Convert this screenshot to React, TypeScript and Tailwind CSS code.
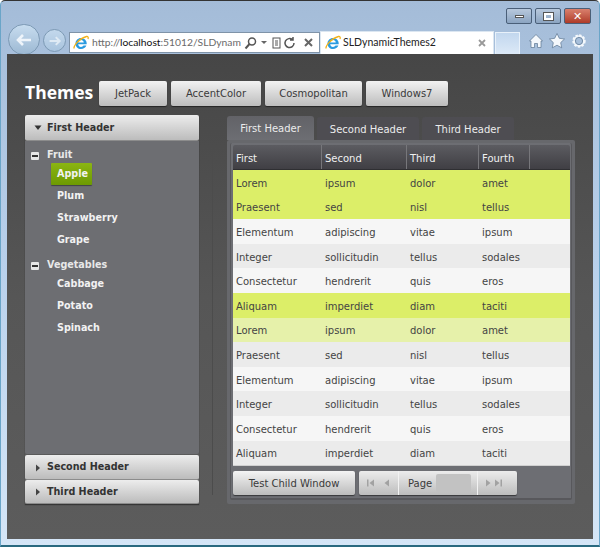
const font = { fontFamily: '"DejaVu Sans", Verdana, sans-serif' }
const chromeFont = { fontFamily: 'Lato, "Open Sans", sans-serif' }

const rows = [
  ['Lorem', 'ipsum', 'dolor', 'amet', 'bg-[#dcee68]'],
  ['Praesent', 'sed', 'nisl', 'tellus', 'bg-[#dcee68]'],
  ['Elementum', 'adipiscing', 'vitae', 'ipsum', 'bg-[#f6f6f6]'],
  ['Integer', 'sollicitudin', 'tellus', 'sodales', 'bg-[#ebebeb]'],
  ['Consectetur', 'hendrerit', 'quis', 'eros', 'bg-[#f6f6f6]'],
  ['Aliquam', 'imperdiet', 'diam', 'taciti', 'bg-[#dcee68]'],
  ['Lorem', 'ipsum', 'dolor', 'amet', 'bg-[#e6f1aa]'],
  ['Praesent', 'sed', 'nisl', 'tellus', 'bg-[#ebebeb]'],
  ['Elementum', 'adipiscing', 'vitae', 'ipsum', 'bg-[#f6f6f6]'],
  ['Integer', 'sollicitudin', 'tellus', 'sodales', 'bg-[#ebebeb]'],
  ['Consectetur', 'hendrerit', 'quis', 'eros', 'bg-[#f6f6f6]'],
  ['Aliquam', 'imperdiet', 'diam', 'taciti', 'bg-[#ebebeb]'],
]

const IeLogo = ({ size }: { size: number }) => (
  <svg width={size} height={size} viewBox="0 0 16 16" fill="none">
    <path d="M13.6 9.3H5.2c.1 1.6 1.3 2.6 2.8 2.6 1.1 0 2-.5 2.5-1.4h2.9c-.8 2.2-2.9 3.6-5.4 3.6C5 14.1 2.5 11.6 2.5 8.5S5 3 8 3c3.2 0 5.7 2.4 5.7 5.5 0 .3 0 .5-.1.8zM5.2 7.4h5.6C10.700 6 9.500 5 8 5 6.600 5 5.400 6 5.200 7.400z" fill="#2a9be0" />
    <path d="M1 13.500C.6 11 5.500 3.500 13.500 1.500c1.500-.3 2 .8 1.500 2.500" stroke="#f2b21a" strokeWidth="1.300" />
  </svg>
)

const WinButton = ({ w, tone, children }: { w: string; tone: string; children: React.ReactNode }) => (
  <div className={`${w} ${tone} h-[16px] rounded-[2px] border border-[#4a5f78] flex items-center justify-center`}>
    {children}
  </div>
)

const ThemeButton = ({ w, label }: { w: string; label: string }) => (
  <button className={`${w} h-[25px] rounded-[2px] bg-gradient-to-b from-[#f2f2f2] to-[#bdbdbd] text-[10px] text-[#3a3a3a] shadow-[0_1px_1px_rgba(0,0,0,0.5)]`}>
    {label}
  </button>
)

const Caret = ({ open }: { open?: boolean }) => (
  <svg width="8" height="8" viewBox="0 0 8 8">
    {open ? <path d="M0.500 1.500h7L4 6z" fill="#333" /> : <path d="M2 0.500v7L6 4z" fill="#444" />}
  </svg>
)

const AccHeader = ({ label, open, h }: { label: string; open?: boolean; h: string }) => (
  <div className={`${h} shrink-0 flex items-center pl-[9px] pt-[1px] gap-[5px] bg-gradient-to-b from-[#ededed] to-[#bcbcbc] border-b border-[#8c8c8c] rounded-[2px] text-[9.6px] font-bold text-[#333]`}>
    <Caret open={open} />
    <span>{label}</span>
  </div>
)

const Collapse = () => (
  <div className="w-[8px] h-[8px] bg-[#e6e6e6] flex items-center justify-center rounded-[1px]">
    <div className="w-[6px] h-[2px] bg-[#333]" />
  </div>
)

const TreeItem = ({ label, selected }: { label: string; selected?: boolean }) => (
  <div className="h-[22px] pl-[26px] flex items-center">
    <span className={`h-[22px] flex items-center px-[6px] text-[9.6px] font-bold text-[#f2f2f2] rounded-[1px] ${selected ? 'w-[41px] bg-gradient-to-b from-[#8bb512] to-[#6d9a02] shadow-[0_1px_1px_rgba(0,0,0,0.4)]' : ''}`}>
      {label}
    </span>
  </div>
)

const TreeGroup = ({ label, items }: { label: string; items: string[] }) => (
  <div>
    <div className="h-[15px] pl-[6px] flex items-center gap-[8px] text-[9.6px] font-bold text-[#e8e8e8]">
      <Collapse />
      <span>{label}</span>
    </div>
    {items.map((item) => (
      <TreeItem key={item} label={item} selected={item === 'Apple'} />
    ))}
  </div>
)

const Tab = ({ w, label, active }: { w: string; label: string; active?: boolean }) => (
  <div className={`${w} flex items-center justify-center rounded-t-[3px] text-[10px] text-[#ececec] ${active ? 'h-[24px] bg-gradient-to-b from-[#626267] to-[#6d6e73]' : 'h-[23px] pt-[1px] bg-[#4e4d52]'}`}>
    {label}
  </div>
)

const HeadCell = ({ w, label }: { w: string; label: string }) => (
  <div className={`${w} h-full flex items-center pl-[3px] pt-[2px] border-r border-[#77777b] text-[10px] text-[#f0f0f0]`}>{label}</div>
)

const PagerArrow = ({ d }: { d: string }) => (
  <svg className="shrink-0" width="9" height="8" viewBox="0 0 9 8">
    <path d={d} fill="#a2a2a2" />
  </svg>
)

export default function App() {
  return (
    <div style={font} className="w-[600px] h-[547px] overflow-hidden flex flex-col bg-gradient-to-b from-[#a4bcd8] via-[#b9d1ec] to-[#d5e6f7] border-t border-x border-[#6aa5c8] border-t-[#333] border-b-2 border-b-[#2a6a80] rounded-t-[5px]">
      <div className="h-[24px] shrink-0 pt-[7px] pr-[8px] flex justify-end gap-[3px]">
        <WinButton w="w-[26px]" tone="bg-gradient-to-b from-[#b8c9dd] to-[#8ba4c1]">
          <div className="w-[9px] h-[3px] bg-white border border-[#555]" />
        </WinButton>
        <WinButton w="w-[26px]" tone="bg-gradient-to-b from-[#b8c9dd] to-[#8ba4c1]">
          <div className="w-[9px] h-[7px] border-2 border-white outline outline-[#555]" />
        </WinButton>
        <WinButton w="w-[27px]" tone="bg-gradient-to-b from-[#d9806d] to-[#ae3a28]">
          <span className="text-[11px] leading-none font-bold text-white">✕</span>
        </WinButton>
      </div>
      <div className="h-[29px] shrink-0 flex items-end pl-[7px]">
        <div className="w-[32px] h-[31px] mb-[-1px] rounded-full bg-gradient-to-b from-[#c7dcef] to-[#9db9d3] border border-[#7d9ab5] flex items-center justify-center">
          <svg width="18" height="14" viewBox="0 0 18 14" fill="none">
            <path d="M16 7H3M8 2 3 7l5 5" stroke="#eef4fa" strokeWidth="2.600" />
          </svg>
        </div>
        <div className="ml-[3px] mb-[2px] w-[23px] h-[23px] rounded-full bg-gradient-to-b from-[#c3d8ec] to-[#a9c4de] border border-[#7d9ab5] flex items-center justify-center">
          <svg width="14" height="12" viewBox="0 0 18 14" fill="none">
            <path d="M2 7h13M10 2l5 5-5 5" stroke="#dfeaf4" strokeWidth="2.600" />
          </svg>
        </div>
        <div style={chromeFont} className="ml-[3px] w-[251px] h-[21px] mb-[1px] bg-white border border-[#7f93a8] flex items-center pl-[3px] text-[10.3px] text-[#6a6a6a]">
          <IeLogo size={16} />
          <span className="ml-[3px] w-[148px] whitespace-nowrap">
            http://<span className="text-[#111]">localhost</span>:51012/SLDynam
          </span>
          <svg className="ml-[4px]" width="54" height="14" viewBox="0 0 54 14" fill="none" stroke="#555" strokeWidth="1.500">
            <circle cx="8" cy="5.500" r="3.500" />
            <path d="M5.500 8 1.500 12.500" strokeWidth="2" />
            <path d="M17 5h6l-3 3z" fill="#666" stroke="none" />
            <rect x="29" y="2" width="7" height="10" strokeWidth="1" />
            <path d="M31 5h3M31 7h3M31 9h3" strokeWidth="1" />
            <path d="M50 7a4.500 4.500 0 1 1-1.500-3.300M49 1v3h-3" />
          </svg>
          <svg className="ml-[6px]" width="9" height="9" viewBox="0 0 9 9" stroke="#666" strokeWidth="2">
            <path d="m1 1 7 7M8 1 1 8" />
          </svg>
        </div>
        <div style={chromeFont} className="w-[174px] h-[23px] bg-white flex items-center pl-[4px] pr-[7px] border-x border-t border-[#dbe6f1] text-[10.5px] text-[#222]">
          <IeLogo size={16} />
          <span className="ml-[2px] flex-1">SLDynamicThemes2</span>
          <svg width="8" height="8" viewBox="0 0 8 8" stroke="#999" strokeWidth="1.800">
            <path d="m1 1 6 6M7 1 1 7" />
          </svg>
        </div>
        <div className="ml-[1px] w-[25px] h-[22px] bg-gradient-to-b from-[#c2d7ee] to-[#dce9f7] border-x border-t border-[#e8f1fa]" />
        <svg className="ml-[9px] mb-[5px]" width="58" height="16" viewBox="0 0 58 16" fill="#f4f8fc" stroke="#5c7690" strokeWidth="0.700">
          <path d="M0.500 8 7 1.500 13.500 8H12v6.500H8.500v-4h-3v4H2V8z" />
          <path d="m28 0.500 2.300 4.800 5.200.7-3.800 3.600 1 5.200-4.700-2.600-4.700 2.600 1-5.200L20.500 6l5.200-.7z" />
          <circle cx="50" cy="8" r="5.300" fill="none" stroke="#f4f8fc" strokeWidth="2.800" strokeDasharray="2.200 1.300" />
          <circle cx="50" cy="8" r="5" fill="none" stroke="#f4f8fc" strokeWidth="1.500" />
          <circle cx="50" cy="8" r="3.600" fill="none" />
        </svg>
      </div>

      <div className="mx-[6px] h-[485px] shrink-0 bg-gradient-to-b from-[#464646] via-[#565656] to-[#5c5c5c] px-[18px] pt-[27px] flex flex-col">
        <div className="h-[25px] flex items-center gap-[4px]">
          <div className="w-[70px] mb-[2px] text-[17.500px] font-bold text-white" style={{ fontFamily: '"Open Sans", sans-serif' }}>Themes</div>
          <ThemeButton w="w-[68px]" label="JetPack" />
          <ThemeButton w="w-[90px]" label="AccentColor" />
          <ThemeButton w="w-[97px]" label="Cosmopolitan" />
          <ThemeButton w="w-[82px]" label="Windows7" />
        </div>

        <div className="mt-[9px] flex">
          <div className="w-[174px] h-[389px] flex flex-col shadow-[0_1px_1px_rgba(0,0,0,0.4)]">
            <AccHeader label="First Header" open h="h-[26px]" />
            <div className="flex-1 bg-[#6d6e72] pt-[7px] flex flex-col gap-[7px] mb-[1px] rounded-b-[2px]">
              <TreeGroup label="Fruit" items={['Apple', 'Plum', 'Strawberry', 'Grape']} />
              <TreeGroup label="Vegetables" items={['Cabbage', 'Potato', 'Spinach']} />
            </div>
            <AccHeader label="Second Header" h="h-[25px]" />
            <AccHeader label="Third Header" h="h-[24px]" />
          </div>

          <div className="w-[1px] h-[345px] mt-[35px] ml-[13px] mr-[14px] bg-[#4c4c4c]" />

          <div className="w-[348px] flex flex-col">
            <div className="h-[25px] pt-[1px] flex items-end gap-[3px]">
              <Tab w="w-[87px]" label="First Header" active />
              <Tab w="w-[102px]" label="Second Header" />
              <Tab w="w-[92px]" label="Third Header" />
            </div>
            <div className="h-[364px] bg-[#67686c] rounded-[2px] p-[3px] pb-[4px]">
              <div className="h-full bg-[#6d6e73] rounded-[2px] border-x border-b-2 border-[#58585c] border-t-0 pl-[2px] pt-[2px]">
                <div className="w-[337px]">
                  <div className="h-[25px] flex bg-gradient-to-b from-[#5c5c61] to-[#403f44] rounded-t-[2px] border-b border-[#2f2f32]">
                    <HeadCell w="w-[89px]" label="First" />
                    <HeadCell w="w-[85px]" label="Second" />
                    <HeadCell w="w-[72px]" label="Third" />
                    <HeadCell w="w-[51px]" label="Fourth" />
                  </div>
                  <div className="border-b border-[#d0d0d0]">
                    {rows.map((r, i) => (
                      <div key={i} className={`${r[4]} h-[24.6px] pt-[2px] flex items-center text-[10px] text-[#444]`}>
                        <span className="w-[89px] pl-[3px]">{r[0]}</span>
                        <span className="w-[85px] pl-[3px]">{r[1]}</span>
                        <span className="w-[72px] pl-[3px]">{r[2]}</span>
                        <span className="pl-[3px]">{r[3]}</span>
                      </div>
                    ))}
                  </div>
                  <div className="mt-[5px] flex gap-[4px]">
                    <button className="w-[122px] h-[24px] rounded-[2px] bg-gradient-to-b from-[#f4f4f4] to-[#bcbcbc] text-[10px] text-[#3a3a3a] shadow-[0_1px_1px_rgba(0,0,0,0.5)]">
                      Test Child Window
                    </button>
                    <div className="w-[158px] h-[24px] rounded-[2px] bg-gradient-to-b from-[#ececec] to-[#bdbdbd] shadow-[0_1px_1px_rgba(0,0,0,0.5)] flex items-center text-[10px] text-[#3a3a3a]">
                      <div className="w-[40px] shrink-0 h-full flex items-center justify-center gap-[7px] border-r border-[#f2f2f2]">
                        <PagerArrow d="M1 0.500h1.500v7H1zM8 0.500v7L3.500 4z" />
                        <PagerArrow d="M7 0.500v7L2.500 4z" />
                      </div>
                      <span className="ml-[9px]">Page</span>
                      <div className="ml-[4px] w-[35px] shrink-0 h-[18px] bg-[#c2c2c2] rounded-[2px]" />
                      <div className="ml-[6px] flex-1 h-full flex items-center pl-[6px] gap-[1px] border-l border-[#f2f2f2]">
                        <PagerArrow d="M2 0.500v7L6.500 4z" />
                        <PagerArrow d="M1 0.500v7L5.500 4zM6.500 0.500H8v7H6.500z" />
                      </div>
                    </div>
                  </div>
                </div>
              </div>
            </div>
          </div>
        </div>
      </div>
    </div>
  )
}
